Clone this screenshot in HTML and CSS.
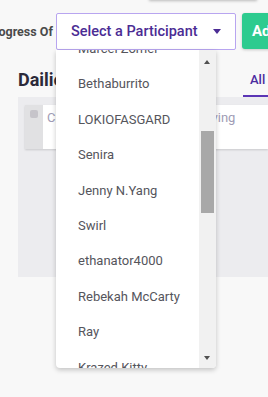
FILE: index.html
```html
<!DOCTYPE html>
<html>
<head>
<meta charset="utf-8">
<link rel="stylesheet" href="styles.css">
</head>
<body>
<div class="topcard"></div>
<div class="toolbar">
  <div class="label">Progress Of</div>
  <div class="select">
    <span class="select-text">Select a Participant</span>
    <span class="caret"></span>
  </div>
  <div class="btn">Add</div>
</div>
<div class="section-head">
  <h2 class="title">Dailies</h2>
  <div class="tab">All</div>
</div>
<div class="panel">
  <div class="card">
    <div class="strip"><span class="checkbox"></span></div>
    <div class="placeholder">Click here to add new daily saving</div>
  </div>
</div>

<div class="menu">
  <div class="list">
    <div class="items">
      <div class="item">Marcel Zomer</div>
      <div class="item">Bethaburrito</div>
      <div class="item">LOKIOFASGARD</div>
      <div class="item">Senira</div>
      <div class="item">Jenny N.Yang</div>
      <div class="item">Swirl</div>
      <div class="item">ethanator4000</div>
      <div class="item">Rebekah McCarty</div>
      <div class="item">Ray</div>
      <div class="item">Krazed Kitty</div>
    </div>
  </div>
  <div class="scrollbar">
    <span class="arrow up"></span>
    <span class="thumb"></span>
    <span class="arrow down"></span>
  </div>
</div>
</body>
</html>
```
FILE: styles.css
```css
html, body {
  margin: 0;
  padding: 0;
}
body {
  width: 268px;
  height: 397px;
  overflow: hidden;
  background: #f8f8f8;
  font-family: Roboto, "Liberation Sans", sans-serif;
  position: relative;
}
.topcard {
  margin-left: 149px;
  width: 108px;
  height: 10px;
  margin-top: -10px;
  background: #fff;
  box-shadow: 0 1px 3px rgba(0,0,0,0.25);
}
.toolbar {
  display: flex;
  align-items: center;
  gap: 6px;
  margin-top: 13px;
  margin-left: -14px;
}
.label {
  font-size: 12.5px;
  font-weight: 700;
  color: #4a4a4a;
  white-space: nowrap;
  width: 64px;
  text-align: right;
  flex: none;
}
.select {
  flex: none;
  box-sizing: border-box;
  width: 180px;
  height: 37px;
  background: #fff;
  border: 1px solid #b8a5f0;
  border-radius: 2px;
  display: flex;
  align-items: center;
  padding-left: 14px;
  padding-right: 14px;
}
.select-text {
  flex: 1;
  font-size: 14.5px;
  font-weight: 500;
  color: #4b2c94;
  white-space: nowrap;
}
.caret {
  width: 0;
  height: 0;
  border-left: 4.5px solid transparent;
  border-right: 4.5px solid transparent;
  border-top: 5px solid #4b2c94;
}
.btn {
  flex: none;
  box-sizing: border-box;
  width: 60px;
  height: 36px;
  margin-top: -1px;
  background: #2dcb8f;
  border-radius: 3px;
  box-shadow: 0 1px 3px rgba(0,0,0,0.2);
  color: #fff;
  font-size: 15px;
  font-weight: 700;
  padding-left: 10px;
  line-height: 36px;
}
.section-head {
  display: flex;
  align-items: flex-end;
  justify-content: space-between;
  margin-top: 12px;
  margin-left: 18px;
  height: 35px;
}
.title {
  margin: 0 0 7px 0;
  font-size: 18px;
  font-weight: 700;
  color: #2c2a3a;
}
.tab {
  box-sizing: border-box;
  width: 25px;
  padding-left: 7px;
  font-size: 13px;
  font-weight: 500;
  color: #4b2ca0;
  padding-bottom: 8px;
  border-bottom: 2px solid #5b35b5;
}
.panel {
  margin-left: 18px;
  height: 180px;
  background: #ececef;
  padding-top: 8px;
  padding-left: 7px;
  box-sizing: border-box;
}
.card {
  display: flex;
  height: 44px;
  background: #fff;
  box-shadow: 0 1px 2px rgba(0,0,0,0.15);
}
.strip {
  width: 18px;
  background: #e1e1e3;
  padding-top: 5px;
  padding-left: 5px;
  box-sizing: border-box;
}
.checkbox {
  display: block;
  width: 8px;
  height: 8px;
  border-radius: 2px;
  background: #c6c4ca;
}
.placeholder {
  padding-left: 4px;
  padding-top: 5px;
  font-size: 13px;
  color: #a09cb6;
  white-space: nowrap;
  word-spacing: -1px;
}
.menu {
  position: absolute;
  left: 56px;
  top: 50px;
  width: 160px;
  height: 318px;
  background: #fff;
  border-radius: 0 0 4px 4px;
  box-shadow: 0 2px 5px rgba(0,0,0,0.22);
  display: flex;
  overflow: hidden;
}
.list {
  flex: 1;
  overflow: hidden;
}
.items {
  margin-top: -19px;
}
.item {
  height: 35.4px;
  line-height: 35.4px;
  padding-left: 22px;
  font-size: 13px;
  color: #55555c;
  white-space: nowrap;
}
.scrollbar {
  flex: none;
  width: 17px;
  background: #f1f1f1;
  position: relative;
}
.arrow {
  position: absolute;
  left: 5px;
  width: 0;
  height: 0;
  border-left: 3.5px solid transparent;
  border-right: 3.5px solid transparent;
}
.arrow.up {
  top: 10px;
  border-bottom: 4px solid #505050;
}
.arrow.down {
  top: 306px;
  border-top: 4px solid #505050;
}
.thumb {
  position: absolute;
  left: 2px;
  width: 13px;
  top: 81px;
  height: 82px;
  background: #a8a8a8;
}
```
